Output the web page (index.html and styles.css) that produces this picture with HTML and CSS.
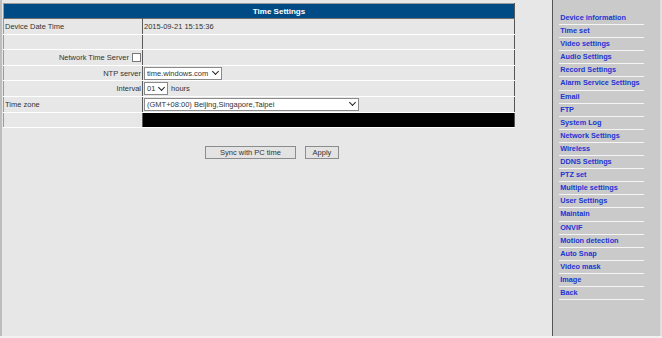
FILE: index.html
```html
<!DOCTYPE html>
<html>
<head>
<meta charset="utf-8">
<link rel="stylesheet" href="styles.css">
</head>
<body>
<div class="page">
  <div class="edge"></div>
  <div class="main">
    <table class="settings">
      <tr class="head"><td colspan="2">Time Settings</td></tr>
      <tr><td class="lbl left">Device Date Time</td><td class="val">2015-09-21 15:15:36</td></tr>
      <tr><td class="lbl"></td><td class="val"></td></tr>
      <tr><td class="lbl right">Network Time Server <span class="chk"></span></td><td class="val"></td></tr>
      <tr><td class="lbl right">NTP server</td><td class="val"><span class="sel sel-ntp">time.windows.com<span class="arr"></span></span></td></tr>
      <tr><td class="lbl right">Interval</td><td class="val"><span class="sel sel-int">01<span class="arr"></span></span> <span class="unit">hours</span></td></tr>
      <tr><td class="lbl left">Time zone</td><td class="val"><span class="sel sel-tz">(GMT+08:00) Beijing,Singapore,Taipei<span class="arr"></span></span></td></tr>
      <tr><td class="lbl"></td><td class="val black"></td></tr>
    </table>
    <div class="buttons">
      <span class="btn btn-sync">Sync with PC time</span>
      <span class="btn btn-apply">Apply</span>
    </div>
  </div>
  <div class="side">
    <ul class="menu">
      <li>Device information</li>
      <li>Time set</li>
      <li>Video settings</li>
      <li>Audio Settings</li>
      <li>Record Settings</li>
      <li>Alarm Service Settings</li>
      <li>Email</li>
      <li>FTP</li>
      <li>System Log</li>
      <li>Network Settings</li>
      <li>Wireless</li>
      <li>DDNS Settings</li>
      <li>PTZ set</li>
      <li>Multiple settings</li>
      <li>User Settings</li>
      <li>Maintain</li>
      <li>ONVIF</li>
      <li>Motion detection</li>
      <li>Auto Snap</li>
      <li>Video mask</li>
      <li>Image</li>
      <li>Back</li>
    </ul>
  </div>
  <div class="redge"></div>
</div>
<div class="foot"></div>
</body>
</html>
```

FILE: styles.css
```css
html, body {
  margin: 0;
  padding: 0;
  background: #f2f2f2;
  font-family: "Liberation Sans", Arial, sans-serif;
}
.page {
  display: flex;
  height: 336px;
  background: #e7e7e7;
}
.edge {
  width: 2px;
  background: #bdbdbd;
}
.main {
  width: 550px;
  padding-top: 3px;
  padding-left: 1px;
}
.settings {
  width: 512px;
  border-collapse: collapse;
  font-size: 7.5px;
  color: #333;
  border: 1px solid #9a9a9a;
  border-right: 1px solid #555;
}
.settings td {
  height: 14.6px;
  padding: 0;
  border-top: 1px solid #6e6e6e;
  border-bottom: 1px solid #ffffff;
}
.settings .head td {
  background: #004b86;
  color: #fff;
  font-weight: bold;
  font-size: 8px;
  text-align: center;
  height: 14px;
  border: none;
  padding-left: 40px;
}
.lbl {
  width: 137px;
  border-right: 1px solid #5a5a5a;
}
.left { text-align: left; padding-left: 1px !important; }
.right { text-align: right; padding-right: 1px !important; }
.val { padding-left: 1px !important; }
.black { background: #000; }
.chk {
  display: inline-block;
  width: 7px;
  height: 7px;
  border: 1px solid #777;
  background: #fff;
  vertical-align: -2px;
  margin-left: 1px;
}
.sel {
  display: inline-flex;
  align-items: center;
  justify-content: space-between;
  height: 11px;
  border: 1px solid #8a8a8a;
  background: #fff;
  padding: 0 3px 0 2px;
  vertical-align: middle;
  box-sizing: content-box;
}
.sel-ntp { width: 71px; }
.sel-int { width: 17px; }
.sel-tz { width: 208px; }
.arr {
  width: 4px;
  height: 4px;
  border-right: 1.3px solid #222;
  border-bottom: 1.3px solid #222;
  transform: rotate(45deg);
  margin-top: -3px;
}
.unit { margin-left: 1px; }
.buttons {
  display: flex;
  gap: 9px;
  padding-left: 202px;
  margin-top: 18px;
}
.btn {
  display: inline-flex;
  align-items: center;
  justify-content: center;
  height: 11px;
  font-size: 7.5px;
  color: #333;
  background: #e3e3e3;
  border: 1px solid #8c8c8c;
}
.btn-sync { width: 89px; }
.btn-apply { width: 32px; }
.side {
  width: 107px;
  background: #cacaca;
  border-left: 1px solid #555;
}
.redge {
  width: 2px;
  background: #e0e0e0;
}
.menu {
  list-style: none;
  margin: 12px 0 0 6px;
  padding: 0;
  width: 85px;
}
.menu li {
  height: 12.1px;
  line-height: 12px;
  border-bottom: 1px solid #f5f5f5;
  font-size: 7.3px;
  font-weight: bold;
  color: #2135d4;
  padding-left: 1px;
  white-space: nowrap;
}
.foot { height: 2px; }
```
